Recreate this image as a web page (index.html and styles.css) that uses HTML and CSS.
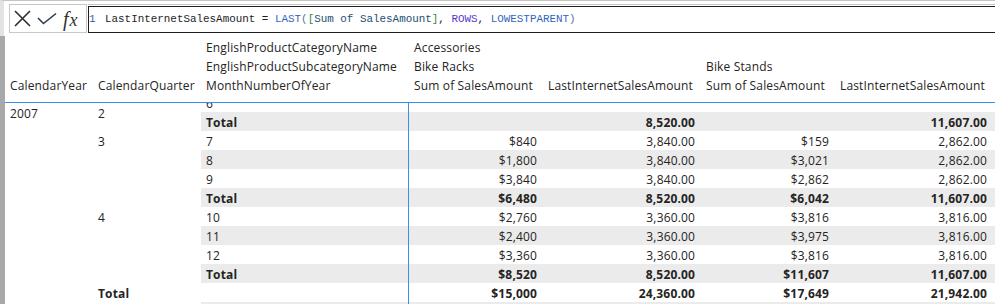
FILE: index.html
```html
<!DOCTYPE html>
<html lang="en">
<head>
    <meta charset="UTF-8">
    <title>LastInternetSalesAmount</title>
    <link rel="stylesheet" href="styles.css">
</head>
<body>
    <div class="formula-bar">
        <div class="formula-tools">
            <svg class="icon-cancel" width="17" height="17" viewBox="0 0 17 17"><path d="M1 1L16 16M16 1L1 16"/></svg>
            <svg class="icon-commit" width="20" height="13" viewBox="0 0 20 13"><path d="M1 6L6.5 11.5L19 1.5"/></svg>
            <span class="fx">f<span>x</span></span>
        </div>
        <div class="formula-edit">
            <div class="formula-code">
                <span class="ln">1</span><span class="code">LastInternetSalesAmount = <span class="fn">LAST</span><span class="par">(</span><span class="br">[</span><span class="col">Sum of SalesAmount</span><span class="br">]</span>, <span class="kw">ROWS</span>, <span class="fn">LOWESTPARENT</span><span class="par">)</span></span>
            </div>
        </div>
    </div>

    <div class="matrix">
        <div class="matrix-head">
            <div class="cell"></div><div class="cell"></div><div class="cell">EnglishProductCategoryName</div><div class="cell">Accessories</div><div class="cell"></div><div class="cell"></div><div class="cell"></div>
            <div class="cell"></div><div class="cell"></div><div class="cell">EnglishProductSubcategoryName</div><div class="cell">Bike Racks</div><div class="cell"></div><div class="cell">Bike Stands</div><div class="cell"></div>
            <div class="cell">CalendarYear</div><div class="cell">CalendarQuarter</div><div class="cell">MonthNumberOfYear</div><div class="cell">Sum of SalesAmount</div><div class="cell">LastInternetSalesAmount</div><div class="cell">Sum of SalesAmount</div><div class="cell">LastInternetSalesAmount</div>
        </div>

        <div class="matrix-body">
            <div class="matrix-rows">
                <div class="cell pinned">2007</div><div class="cell pinned">2</div><div class="cell month">6</div><div class="cell num"></div><div class="cell num"></div><div class="cell num"></div><div class="cell num"></div>

                <div class="cell"></div><div class="cell"></div><div class="cell month band total">Total</div><div class="cell num band total"></div><div class="cell num band total">8,520.00</div><div class="cell num band total"></div><div class="cell num band total">11,607.00</div>

                <div class="cell"></div><div class="cell">3</div><div class="cell month">7</div><div class="cell num">$840</div><div class="cell num">3,840.00</div><div class="cell num">$159</div><div class="cell num">2,862.00</div>
                <div class="cell"></div><div class="cell"></div><div class="cell month band">8</div><div class="cell num band">$1,800</div><div class="cell num band">3,840.00</div><div class="cell num band">$3,021</div><div class="cell num band">2,862.00</div>
                <div class="cell"></div><div class="cell"></div><div class="cell month">9</div><div class="cell num">$3,840</div><div class="cell num">3,840.00</div><div class="cell num">$2,862</div><div class="cell num">2,862.00</div>
                <div class="cell"></div><div class="cell"></div><div class="cell month band total">Total</div><div class="cell num band total">$6,480</div><div class="cell num band total">8,520.00</div><div class="cell num band total">$6,042</div><div class="cell num band total">11,607.00</div>

                <div class="cell"></div><div class="cell">4</div><div class="cell month">10</div><div class="cell num">$2,760</div><div class="cell num">3,360.00</div><div class="cell num">$3,816</div><div class="cell num">3,816.00</div>
                <div class="cell"></div><div class="cell"></div><div class="cell month band">11</div><div class="cell num band">$2,400</div><div class="cell num band">3,360.00</div><div class="cell num band">$3,975</div><div class="cell num band">3,816.00</div>
                <div class="cell"></div><div class="cell"></div><div class="cell month">12</div><div class="cell num">$3,360</div><div class="cell num">3,360.00</div><div class="cell num">$3,816</div><div class="cell num">3,816.00</div>
                <div class="cell"></div><div class="cell"></div><div class="cell month band total">Total</div><div class="cell num band total">$8,520</div><div class="cell num band total">8,520.00</div><div class="cell num band total">$11,607</div><div class="cell num band total">11,607.00</div>

                <div class="cell"></div><div class="cell total">Total</div><div class="cell month"></div><div class="cell num total">$15,000</div><div class="cell num total">24,360.00</div><div class="cell num total">$17,649</div><div class="cell num total">21,942.00</div>
                <div class="cell"></div><div class="cell"></div><div class="cell month band"></div><div class="cell num band"></div><div class="cell num band"></div><div class="cell num band"></div><div class="cell num band"></div>
            </div>
        </div>
    </div>
</body>
</html>
```

FILE: styles.css
```css
body {
    margin: 0;
    width: 995px;
    height: 304px;
    overflow: hidden;
    font-family: "Open Sans", "Noto Sans", sans-serif;
    font-size: 12px;
    color: #252423;
    background-color: white;
}

/* formula bar */
.formula-bar {
    display: flex;
    height: 36px;
    box-sizing: border-box;
    border-top: 1px solid #c4c4c4;
    border-left: 4px solid #e3e3e3;
}
.formula-tools {
    display: flex;
    align-items: center;
    width: 78px;
    height: 29px;
    box-sizing: border-box;
    margin: 3px 0 0 5px;
    padding-left: 4px;
    border: 1px solid #c8c8c8;
}
.formula-tools svg {
    fill: none;
    stroke-width: 1.6;
}
.icon-cancel {
    stroke: #2d2d2d;
}
.icon-commit {
    margin-left: 6px;
    stroke: #2d3a55;
}
.fx {
    margin-left: 6px;
    font-family: "Liberation Serif", serif;
    font-style: italic;
    font-size: 20px;
    line-height: 1;
    color: #333;
}
.fx span {
    font-size: 18px;
    margin-left: 1px;
}
.formula-edit {
    flex: 1;
    margin: 3px 0 0 1px;
    padding-top: 1px;
    border-top: 1px solid #c6c6c6;
}
.formula-code {
    display: flex;
    align-items: center;
    height: 27px;
    box-sizing: border-box;
    padding-bottom: 2px;
    border: 1px solid #1f1f1f;
    border-right: none;
    font-family: "Liberation Mono", monospace;
    font-size: 10.9px;
    color: #1e1e1e;
    white-space: pre;
}
.ln {
    width: 16px;
    color: #2b5f9e;
}
.fn {
    color: #3165bb;
}
.kw {
    color: #5438c8;
}
.col {
    color: #1d4f76;
}
.br {
    color: #2e8a3a;
}
.par {
    color: #6a6a9a;
}

/* matrix visual */
.matrix {
    height: 268px;
    border-left: 5px solid #a8a8a8;
    letter-spacing: 0.15px;
}
.matrix-head,
.matrix-rows {
    display: grid;
    grid-template-columns: 88px 108px 208px 134px 158px 134px 1fr;
    grid-auto-rows: 19px;
}
.matrix-head {
    padding: 1px 0 8px;
    border-bottom: 1px solid #3a8ef0;
}
.matrix-body {
    height: 201px;
    overflow: hidden;
}
.matrix-rows {
    margin-top: -10px;
}
.cell {
    padding: 2px 6px 0 5px;
    line-height: 17px;
    white-space: nowrap;
}
.cell:nth-child(7n) {
    padding-right: 8px;
}
.num {
    text-align: right;
}
.band {
    background-color: #ebebeb;
}
.month {
    box-sizing: border-box;
    border-right: 1px solid #3a8ef0;
}
.total {
    font-weight: 700;
}
.pinned {
    padding-top: 12px;
}
```
